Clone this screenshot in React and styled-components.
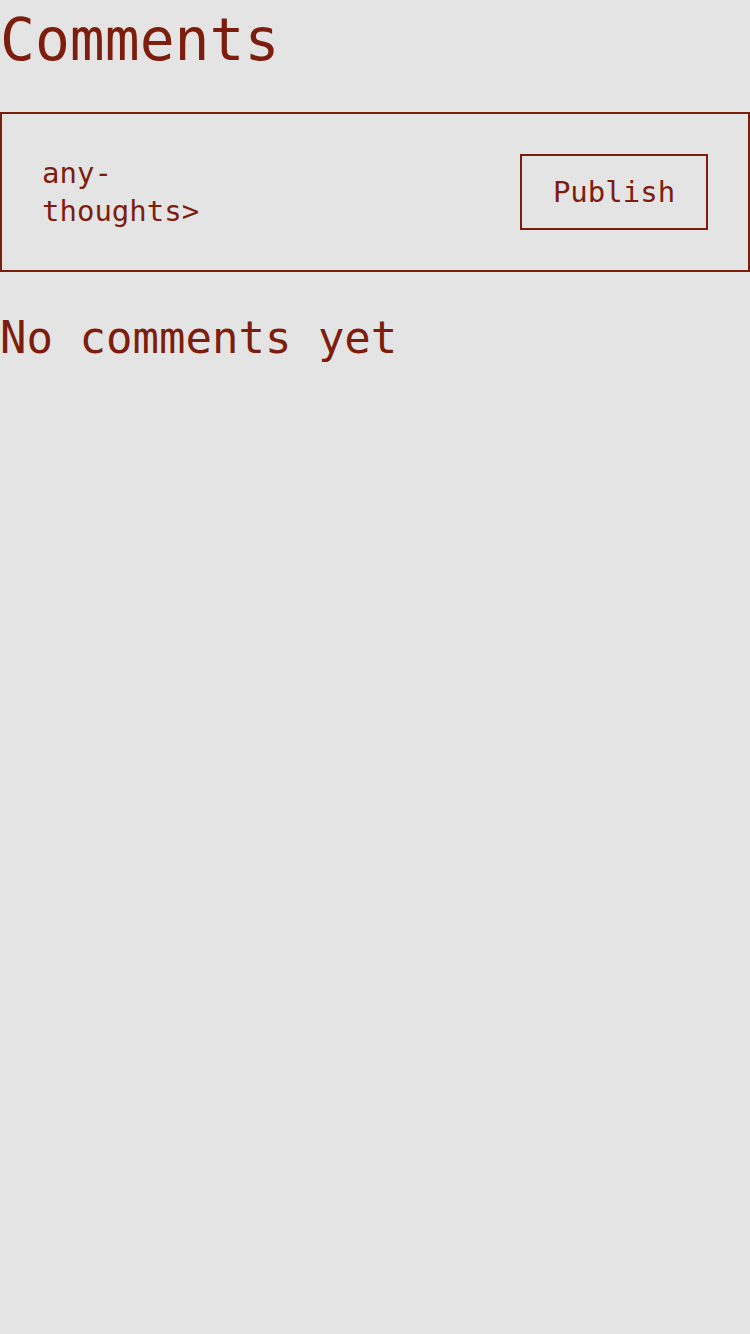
import React from "react";
import styled, { createGlobalStyle } from "styled-components";

const GlobalStyle = createGlobalStyle`
  html, body {
    margin: 0;
    padding: 0;
    background: #e4e4e4;
  }
  body {
    font-family: "DejaVu Sans Mono", monospace;
    color: #7d1d0d;
  }
`;

const Page = styled.div`
  min-height: 1334px;
  background: #e4e4e4;
  color: #7d1d0d;
`;

const Title = styled.h1`
  margin: 0;
  padding-top: 6px;
  font-size: 58px;
  font-weight: normal;
  line-height: 68px;
`;

const Form = styled.form`
  margin-top: 38px;
  border: 2px solid #7d1d0d;
  padding: 40px;
  display: flex;
  justify-content: space-between;
  align-items: center;
`;

const Thoughts = styled.textarea`
  width: 180px;
  height: 76px;
  border: none;
  background: transparent;
  resize: none;
  padding: 0;
  font-family: "DejaVu Sans Mono", monospace;
  font-size: 29px;
  line-height: 38px;
  color: #7d1d0d;
  outline: none;
  overflow: hidden;
  &::placeholder {
    color: #7d1d0d;
    opacity: 1;
  }
`;

const Publish = styled.button`
  width: 188px;
  height: 76px;
  border: 2px solid #7d1d0d;
  background: transparent;
  color: #7d1d0d;
  font-family: "DejaVu Sans Mono", monospace;
  font-size: 29px;
  cursor: pointer;
`;

const Empty = styled.h2`
  margin: 40px 0 0;
  font-size: 44px;
  font-weight: normal;
  line-height: 51px;
`;

export default function App() {
  return (
    <Page>
      <GlobalStyle />
      <Title>Comments</Title>
      <Form onSubmit={(e) => e.preventDefault()}>
        <Thoughts placeholder="any-thoughts>" />
        <Publish type="submit">Publish</Publish>
      </Form>
      <Empty>No comments yet</Empty>
    </Page>
  );
}
